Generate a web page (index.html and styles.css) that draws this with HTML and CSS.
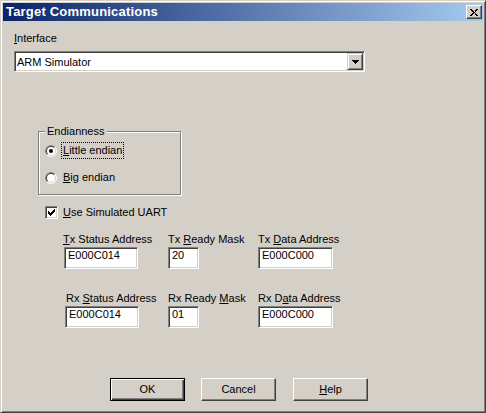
FILE: index.html
```html
<!DOCTYPE html>
<html>
<head>
<meta charset="utf-8">
<title>Target Communications</title>
<link rel="stylesheet" href="styles.css">
</head>
<body>
<div class="window">
  <div class="titlebar">
    <span class="title">Target Communications</span>
    <span class="close">
      <svg width="8" height="7" viewBox="0 0 8 7" shape-rendering="crispEdges"><path d="M0 0h2v1H0zM1 1h2v1H1zM2 2h1.5v1H2zM3 3h2v1H3zM4.5 4h1.5v1H4.5zM5 5h2v1H5zM6 6h2v1H6zM6 0h2v1H6zM5 1h2v1H5zM4.5 2h1.5v1H4.5zM2 4h1.5v1H2zM1 5h2v1H1zM0 6h2v1H0z" fill="#000"/></svg>
    </span>
  </div>
  <div class="content">
    <div class="lbl-interface"><u>I</u>nterface</div>
    <div class="combo">
      <span class="combo-text">ARM Simulator</span>
      <span class="combo-btn">
        <svg width="7" height="4" viewBox="0 0 7 4" shape-rendering="crispEdges"><path d="M0 0h7v1H0zM1 1h5v1H1zM2 2h3v1H2zM3 3h1v1H3z" fill="#000"/></svg>
      </span>
    </div>

    <div class="group">
      <span class="legend">Endianness</span>
      <div class="radio-row">
        <svg class="radio" width="12" height="12" viewBox="0 0 12 12">
          <circle cx="6" cy="6" r="6" fill="#fff"/>
          <path d="M1.757 10.243A6 6 0 0 1 10.243 1.757Z" fill="#808080"/>
          <circle cx="6" cy="6" r="5" fill="#d4d0c8"/>
          <path d="M2.464 9.536A5 5 0 0 1 9.536 2.464Z" fill="#404040"/>
          <circle cx="6" cy="6" r="4" fill="#fff"/>
          <circle cx="6" cy="6" r="2" fill="#000"/>
        </svg>
        <span class="rlabel focus"><u>L</u>ittle endian</span>
      </div>
      <div class="radio-row">
        <svg class="radio" width="12" height="12" viewBox="0 0 12 12">
          <circle cx="6" cy="6" r="6" fill="#fff"/>
          <path d="M1.757 10.243A6 6 0 0 1 10.243 1.757Z" fill="#808080"/>
          <circle cx="6" cy="6" r="5" fill="#d4d0c8"/>
          <path d="M2.464 9.536A5 5 0 0 1 9.536 2.464Z" fill="#404040"/>
          <circle cx="6" cy="6" r="4" fill="#fff"/>
        </svg>
        <span class="rlabel"><u>B</u>ig endian</span>
      </div>
    </div>

    <div class="check-row">
      <span class="check">
        <svg width="7" height="7" viewBox="0 0 7 7" shape-rendering="crispEdges"><path d="M0 2h1v3H0zM1 3h1v3H1zM2 4h1v3H2zM3 3h1v3H3zM4 2h1v3H4zM5 1h1v3H5zM6 0h1v3H6z" fill="#000"/></svg>
      </span>
      <span class="clabel"><u>U</u>se Simulated UART</span>
    </div>

    <div class="fields">
      <div class="cell c1">
        <div class="flabel"><u>T</u>x Status Address</div>
        <div class="edit w1">E000C014</div>
      </div>
      <div class="cell c2">
        <div class="flabel">Tx <u>R</u>eady Mask</div>
        <div class="edit w2">20</div>
      </div>
      <div class="cell c3">
        <div class="flabel">Tx <u>D</u>ata Address</div>
        <div class="edit w3">E000C000</div>
      </div>
      <div class="cell c1 r2">
        <div class="flabel">Rx <u>S</u>tatus Address</div>
        <div class="edit w1">E000C014</div>
      </div>
      <div class="cell c2">
        <div class="flabel">Rx Ready <u>M</u>ask</div>
        <div class="edit w2">01</div>
      </div>
      <div class="cell c3">
        <div class="flabel">Rx D<u>a</u>ta Address</div>
        <div class="edit w3">E000C000</div>
      </div>
    </div>

    <div class="buttons">
      <div class="btn default">OK</div>
      <div class="btn">Cancel</div>
      <div class="btn help"><u>H</u>elp</div>
    </div>
  </div>
</div>
</body>
</html>
```

FILE: styles.css
```css
* { box-sizing: border-box; }
html, body { margin: 0; padding: 0; }
body {
  width: 486px;
  height: 413px;
  overflow: hidden;
  background: #d4d0c8;
  font-family: "Liberation Sans", Arial, sans-serif;
  font-size: 11px;
  line-height: 13px;
  color: #000;
}
u { text-decoration: underline; text-underline-offset: 1px; }

.window {
  width: 486px;
  height: 413px;
  background: #d4d0c8;
  border: 1px solid;
  border-color: #d4d0c8 #404040 #404040 #d4d0c8;
  box-shadow: inset 1px 1px #fff, inset -1px -1px #808080;
  padding: 2px;
  display: flex;
  flex-direction: column;
}

.titlebar {
  height: 18px;
  flex: none;
  background: linear-gradient(to right, #0a246a, #a6caf0);
  display: flex;
  align-items: center;
  justify-content: space-between;
  padding: 0 1px 0 3px;
}
.title {
  color: #fff;
  font-weight: bold;
  font-size: 13px;
  letter-spacing: 0.2px;
  line-height: 18px;
}
.close {
  width: 16px;
  height: 14px;
  background: #d4d0c8;
  border: 1px solid;
  border-color: #fff #404040 #404040 #fff;
  box-shadow: inset -1px -1px #808080;
  display: flex;
  align-items: center;
  justify-content: center;
}

.content {
  padding: 11px 0 0 11px;
  display: flex;
  flex-direction: column;
  align-items: flex-start;
}

.lbl-interface { height: 13px; }

.combo {
  margin-top: 6px;
  width: 351px;
  height: 21px;
  background: #fff;
  border: 1px solid;
  border-color: #808080 #fff #fff #808080;
  box-shadow: inset 1px 1px #404040, inset -1px -1px #d4d0c8;
  padding: 1px;
  display: flex;
}
.combo-text {
  flex: 1;
  padding: 3px 0 0 1px;
}
.combo-btn {
  width: 16px;
  height: 17px;
  background: #d4d0c8;
  border: 1px solid;
  border-color: #d4d0c8 #404040 #404040 #d4d0c8;
  box-shadow: inset 1px 1px #fff, inset -1px -1px #808080;
  display: flex;
  align-items: center;
  justify-content: center;
}

.group {
  position: relative;
  margin: 59px 0 0 24px;
  width: 143px;
  height: 64px;
  border: 1px solid #808080;
  box-shadow: inset 1px 1px #fff, 1px 1px #fff;
  padding: 10px 0 0 6px;
  display: flex;
  flex-direction: column;
  gap: 10px;
}
.legend {
  position: absolute;
  top: -7px;
  left: 6px;
  padding: 0 2px;
  background: #d4d0c8;
  line-height: 13px;
}
.radio-row {
  height: 17px;
  display: flex;
  align-items: center;
}
.radio { flex: none; }
.rlabel {
  margin-left: 4px;
  padding: 1px 1px;
  border: 1px dotted transparent;
}
.rlabel.focus { border-color: #000; }

.check-row {
  margin: 9px 0 0 31px;
  height: 17px;
  display: flex;
  align-items: center;
}
.check {
  width: 13px;
  height: 13px;
  background: #fff;
  border: 1px solid;
  border-color: #808080 #fff #fff #808080;
  box-shadow: inset 1px 1px #404040, inset -1px -1px #d4d0c8;
  display: flex;
  align-items: center;
  justify-content: center;
}
.clabel { margin-left: 5px; }

.fields {
  margin: 12px 0 0 49px;
  display: grid;
  grid-template-columns: 105px 90px 80px;
  row-gap: 23px;
}
.cell { display: flex; flex-direction: column; align-items: flex-start; }
.flabel { height: 13px; white-space: nowrap; }
.r2 .flabel { margin-left: 3px; }
.edit {
  margin-top: 1px;
  height: 22px;
  background: #fff;
  border: 1px solid;
  border-color: #808080 #fff #fff #808080;
  box-shadow: inset 1px 1px #404040, inset -1px -1px #d4d0c8;
  padding: 1px 0 0 3px;
}
.c1 .edit { margin-left: 1px; }
.r2 .edit { margin-left: 2px; }
.w1 { width: 74px; }
.w2 { width: 31px; }
.w3 { width: 75px; }

.buttons {
  margin: 50px 0 0 96px;
  display: flex;
  gap: 16px;
}
.btn {
  width: 75px;
  height: 23px;
  border: 1px solid;
  border-color: #fff #404040 #404040 #fff;
  box-shadow: inset -1px -1px #808080;
  text-align: center;
  line-height: 21px;
}
.btn.default {
  border-color: #000;
  box-shadow: inset 1px 1px #fff, inset -1px -1px #404040, inset -2px -2px #808080;
}
.btn.help { margin-left: 1px; }
```
